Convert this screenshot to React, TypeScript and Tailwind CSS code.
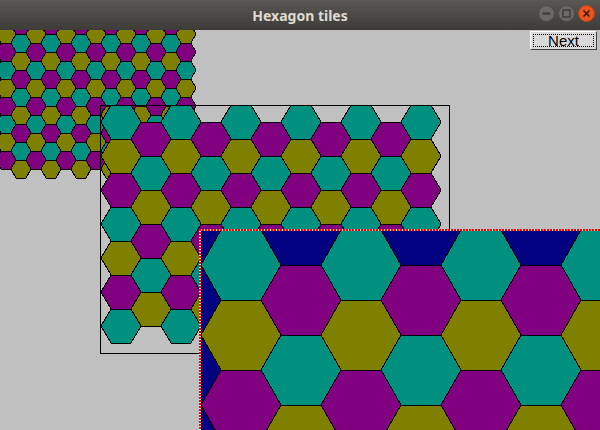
const TILE = ["#009080", "#808000", "#800080"]

type FieldProps = { s: number; h: number; w: number; ht: number }

function hexPoints(cx: number, cy: number, s: number, h: number) {
  const i = s / 2
  return [
    [cx - s, cy],
    [cx - i, cy - h],
    [cx + i, cy - h],
    [cx + s, cy],
    [cx + i, cy + h],
    [cx - i, cy + h],
  ]
    .map((p) => p.join(","))
    .join(" ")
}

// draws every hexagon that fits whole inside w x ht
function HexField({ s, h, w, ht }: FieldProps) {
  const hexes: { key: string; points: string; fill: string }[] = []
  for (let c = 0; ; c++) {
    const cx = s + 1.5 * s * c
    if (cx + s > w) break
    const odd = c % 2 === 1
    for (let r = 0; ; r++) {
      const cy = (odd ? 2 * h : h) + 2 * h * r
      if (cy + h > ht) break
      hexes.push({
        key: `${c}-${r}`,
        points: hexPoints(cx, cy, s, h),
        fill: TILE[(r + (odd ? 2 : 0)) % 3],
      })
    }
  }
  return (
    <svg width={w} height={ht} shapeRendering="crispEdges" className="block">
      {hexes.map((hx) => (
        <polygon key={hx.key} points={hx.points} fill={hx.fill} stroke="#000" strokeWidth={1} />
      ))}
    </svg>
  )
}

function TitleButtons() {
  return (
    <div className="absolute right-[5px] top-[5px] flex gap-[3px]">
      <svg width="17" height="17" viewBox="0 0 17 17">
        <circle cx="8.5" cy="8.5" r="8" fill="#6b6964" stroke="#4a4844" />
        <rect x="4.5" y="7.5" width="8" height="2" fill="#3a3935" />
      </svg>
      <svg width="17" height="17" viewBox="0 0 17 17">
        <circle cx="8.5" cy="8.5" r="8" fill="#6b6964" stroke="#4a4844" />
        <rect x="5" y="5" width="7" height="7" fill="none" stroke="#3a3935" strokeWidth="1.4" />
      </svg>
      <svg width="17" height="17" viewBox="0 0 17 17">
        <circle cx="8.5" cy="8.5" r="8" fill="#e9541f" stroke="#b8421a" />
        <path d="M5.5 5.5 L11.5 11.5 M11.5 5.5 L5.5 11.5" stroke="#3c1a0c" strokeWidth="1.6" />
      </svg>
    </div>
  )
}

export default function App() {
  return (
    <div className="h-[430px] w-[600px] overflow-hidden bg-[#c0c0c0]">
      <div className="relative flex h-[30px] items-center justify-center bg-gradient-to-b from-[#5a5853] to-[#3d3c38]">
        <span className="font-['Noto_Sans',sans-serif] text-[14px] font-bold text-[#dfdbd2]">
          Hexagon tiles
        </span>
        <TitleButtons />
      </div>

      <div className="relative h-[400px] overflow-hidden">
        {/* small tiling, drawn from behind the title bar */}
        <div className="absolute left-[-4px] top-[-23px]">
          <HexField s={10} h={9} w={200} ht={175} />
        </div>

        {/* medium tiling with a plain frame */}
        <div className="absolute left-[100px] top-[75px] h-[249px] w-[350px] border border-black" />
        <div className="absolute left-[101px] top-[75px]">
          <HexField s={20} h={17} w={348} ht={248} />
        </div>

        {/* large tiling on navy with dotted focus frame */}
        <div className="absolute left-[199px] top-[199px] h-[201px] w-[401px] overflow-hidden bg-[#000080]">
          <div className="absolute left-[2px] top-[1px]">
            <HexField s={40} h={35} w={460} ht={320} />
          </div>
          <svg width="401" height="201" className="absolute left-0 top-0" shapeRendering="crispEdges">
            <line x1="0" y1="1" x2="401" y2="1" stroke="#e0e0e0" strokeWidth="2" />
            <line x1="1" y1="0" x2="1" y2="201" stroke="#e0e0e0" strokeWidth="2" />
            <line x1="0" y1="1" x2="401" y2="1" stroke="#ff0000" strokeWidth="2" strokeDasharray="2 1" />
            <line x1="1" y1="0" x2="1" y2="201" stroke="#ff0000" strokeWidth="2" strokeDasharray="2 1" />
          </svg>
        </div>

        <button className="absolute left-[530px] top-[1px] flex h-[19px] w-[67px] items-center justify-center border border-t-white border-l-white border-b-[#404040] border-r-[#404040] bg-[#dadada] p-[2px]">
          <span className="flex h-full w-full items-center justify-center border border-dotted border-black font-['Liberation_Sans',sans-serif] text-[15px] leading-none text-black">
            Next
          </span>
        </button>
      </div>
    </div>
  )
}
